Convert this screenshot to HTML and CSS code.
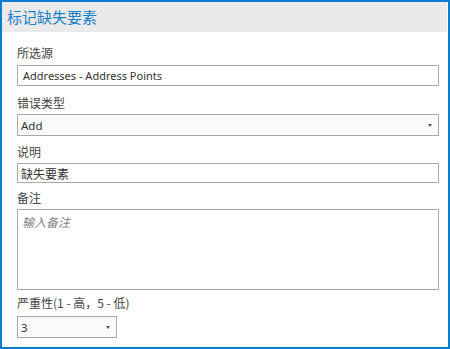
FILE: index.html
```html
<!DOCTYPE html>
<html lang="zh">
<head>
<meta charset="utf-8">
<title>标记缺失要素</title>
<link rel="stylesheet" href="styles.css">
</head>
<body>
<div class="panel">
  <div class="header">标记缺失要素</div>
  <div class="content">
    <div class="label l1">所选源</div>
    <div class="field input f1">Addresses - Address Points</div>
    <div class="label l2">错误类型</div>
    <div class="field select f2"><span class="val">Add</span><span class="arrow"></span></div>
    <div class="label l3">说明</div>
    <div class="field input f3">缺失要素</div>
    <div class="label l4">备注</div>
    <div class="field textarea f4"><span class="ph">输入备注</span></div>
    <div class="label l5">严重性(1 - 高，5 - 低)</div>
    <div class="field select small f5"><span class="val">3</span><span class="arrow"></span></div>
  </div>
</div>
</body>
</html>
```
FILE: styles.css
```css
html, body {
  margin: 0;
  padding: 0;
  background: #ffffff;
}
.panel {
  box-sizing: border-box;
  width: 450px;
  height: 349px;
  border: 2px solid #0a7fd2;
  background: #ffffff;
  font-family: "Noto Sans", "Noto Sans CJK SC", sans-serif;
  color: #333333;
}
.header {
  height: 30px;
  margin-right: 1px;
  background: #eaeaea;
  color: #1a7ec9;
  font-family: "Noto Sans CJK SC", sans-serif;
  font-size: 15px;
  line-height: 30px;
  padding-left: 5px;
}
.content {
  padding: 13px 9px 0 15px;
}
.label {
  font-family: "Noto Sans CJK SC", sans-serif;
  font-size: 12px;
  line-height: 16px;
  height: 16px;
  color: #444444;
}
.field {
  box-sizing: border-box;
  border: 1px solid #a9a9a9;
  font-size: 11.5px;
  display: flex;
  align-items: center;
}
.input {
  background: #ffffff;
}
.select {
  background: #fafafa;
  justify-content: space-between;
  padding: 0 6px 0 3px;
}
.f1 { margin-top: 4px; height: 21px; padding-left: 5px; font-size: 11px; }
.l2 { margin-top: 9px; }
.f2 { margin-top: 3px; height: 22px; }
.l3 { margin-top: 8px; }
.f3 { margin-top: 3px; height: 20px; padding-left: 3px; font-family: "Noto Sans CJK SC", sans-serif; font-size: 12px; }
.l4 { margin-top: 7px; }
.f4 {
  margin-top: 3px;
  height: 81px;
  align-items: flex-start;
  padding: 3px 4px;
}
.l5 { margin-top: 5px; }
.f5 { margin-top: 5px; height: 22px; width: 100px; }
.ph {
  font-family: "Noto Sans CJK SC", sans-serif;
  font-style: italic;
  color: #808080;
  font-size: 12px;
}
.arrow {
  width: 0;
  height: 0;
  border-left: 2.5px solid transparent;
  border-right: 2.5px solid transparent;
  border-top: 3px solid #555555;
}
```
